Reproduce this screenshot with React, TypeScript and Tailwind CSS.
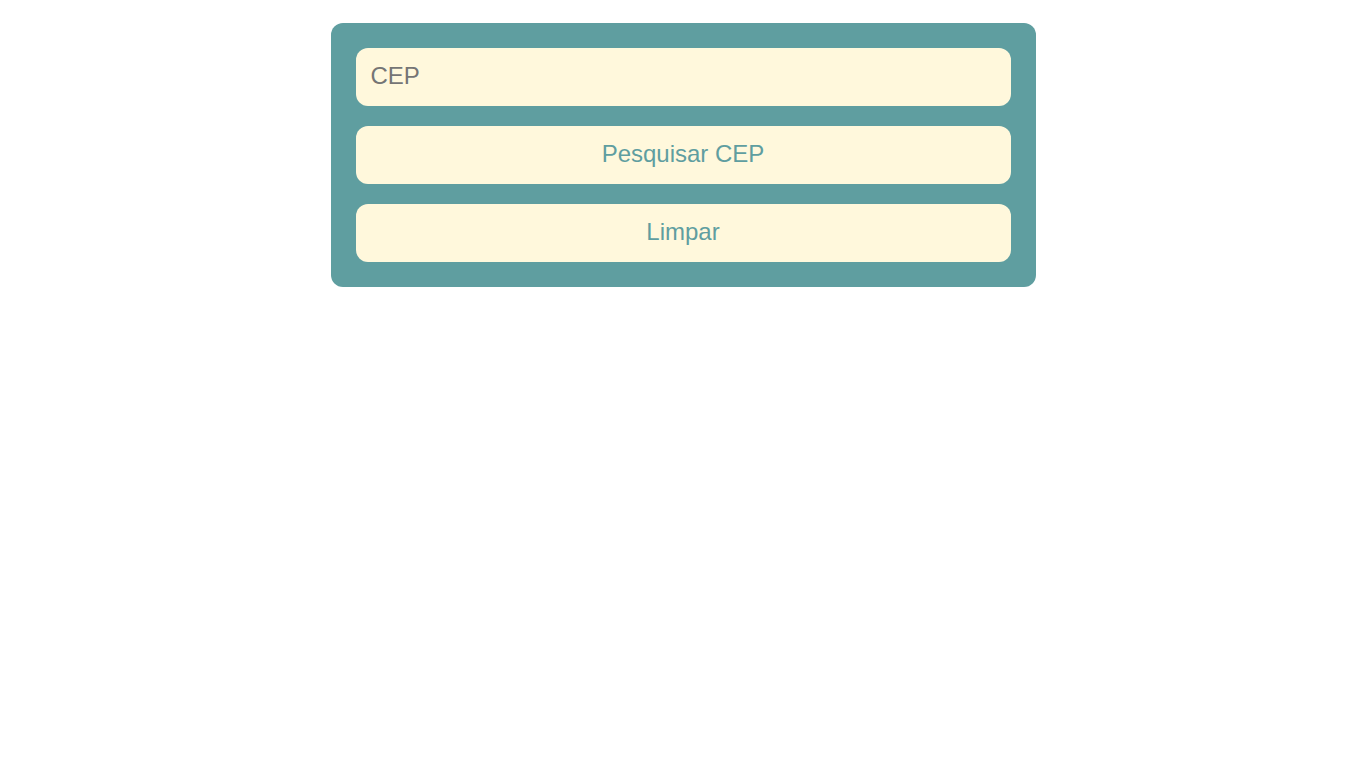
export default function App() {
  return (
    <div className="min-h-screen bg-white pt-[23px] font-['Liberation_Sans',Arial,sans-serif]">
      <div className="mx-auto flex w-[705px] flex-col gap-5 rounded-xl bg-[#5f9ea0] p-[25px]">
        <input
          type="text"
          placeholder="CEP"
          className="h-[58px] w-full rounded-xl bg-[#fff8dc] px-[15px] pb-[2px] text-[24px] text-[#333] outline-none placeholder:text-[#757575]"
        />
        <button className="h-[58px] w-full rounded-xl bg-[#fff8dc] pb-[2px] text-[24px] text-[#5f9ea0]">
          Pesquisar CEP
        </button>
        <button className="h-[58px] w-full rounded-xl bg-[#fff8dc] pb-[2px] text-[24px] text-[#5f9ea0]">
          Limpar
        </button>
      </div>
    </div>
  );
}
